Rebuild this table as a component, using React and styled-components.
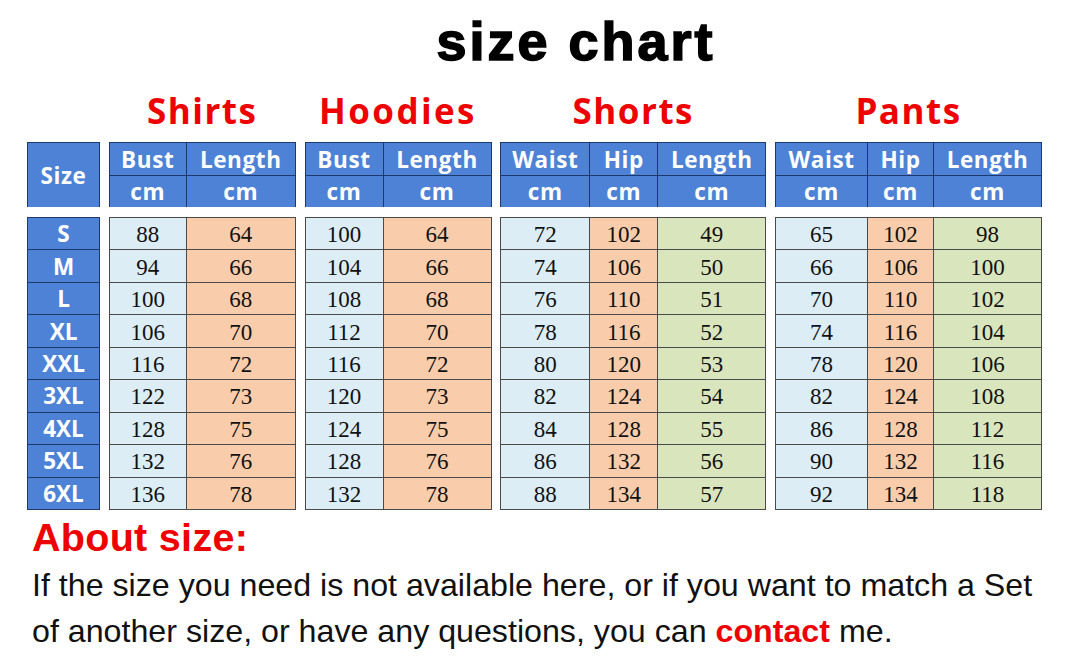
import React from 'react'
import styled, { createGlobalStyle } from 'styled-components'

const GlobalStyle = createGlobalStyle`
    html, body {
        margin: 0;
        padding: 0;
        background: #ffffff;
    }
    body {
        font-family: "Liberation Sans", Arial, sans-serif;
    }
`

const Page = styled.div`
    width: 1080px;
    height: 672px;
    overflow: hidden;
    box-sizing: border-box;
    padding: 12px 0 0 27px;
    background: #ffffff;
`

const Title = styled.h1`
    margin: 0;
    padding-left: 41px;
    width: 1016px;
    box-sizing: content-box;
    text-align: center;
    font-family: "Liberation Sans", Arial, sans-serif;
    font-weight: bold;
    font-size: 54px;
    line-height: 58px;
    letter-spacing: 3px;
    -webkit-text-stroke: 1.6px #000;
    color: #000;
`

const Chart = styled.div`
    display: grid;
    grid-template-columns: 73px 187px 187px 266px 267px;
    column-gap: 8.75px;
    margin-top: 14px;
`

const Group = styled.div`
    display: flex;
    flex-direction: column;
`

const Category = styled.div`
    height: 58px;
    padding-bottom: 6px;
    box-sizing: border-box;
    display: flex;
    align-items: center;
    justify-content: center;
    font-family: "Open Sans", "Noto Sans", sans-serif;
    font-weight: bold;
    font-size: 35px;
    letter-spacing: ${p => p.$wide ? '2.4px' : '1.5px'};
    color: #ee0000;
`

const HeadTable = styled.div`
    display: grid;
    grid-template-columns: ${p => p.cols};
    grid-template-rows: 32px 31px;
    gap: 1px;
    background: #1d3a6c;
    border: 1px solid #1d3a6c;
    height: 65px;
    box-sizing: border-box;
`

const HeadCell = styled.div`
    background: #4d82d6;
    color: #ffffff;
    display: flex;
    align-items: center;
    justify-content: center;
    font-family: "Open Sans", "Noto Sans", sans-serif;
    font-weight: bold;
    font-size: 22.5px;
    letter-spacing: 0.6px;
    grid-row: ${p => (p.$span ? '1 / span 2' : 'auto')};
`

const BodyTable = styled.div`
    margin-top: 10px;
    display: grid;
    grid-template-columns: ${p => p.cols};
    grid-auto-rows: 1fr;
    gap: 1px;
    background: ${p => (p.$navy ? '#1d3a6c' : '#4a4a4a')};
    border: 1px solid ${p => (p.$navy ? '#1d3a6c' : '#4a4a4a')};
    height: 293px;
    box-sizing: border-box;
`

const SizeCell = styled.div`
    background: #4d82d6;
    color: #ffffff;
    display: flex;
    align-items: center;
    justify-content: center;
    font-family: "Open Sans", "Noto Sans", sans-serif;
    font-weight: bold;
    font-size: 22.5px;
`

const tones = {
    blue: '#dcedf6',
    orange: '#f9cdab',
    green: '#d9e5bd',
}

const Cell = styled.div`
    background: ${p => tones[p.$tone]};
    color: #111;
    display: flex;
    align-items: center;
    justify-content: center;
    padding-top: 3px;
    font-family: "Liberation Serif", "Times New Roman", serif;
    font-size: 23px;
`

const About = styled.div`
    margin-top: 6px;
    padding-left: 5px;
    font-family: "Liberation Sans", Arial, sans-serif;
    font-weight: bold;
    font-size: 39.5px;
    line-height: 42px;
    color: #ee0000;
    letter-spacing: 0.3px;
`

const Note = styled.p`
    margin: 4px 0 0 5px;
    font-family: "Liberation Sans", Arial, sans-serif;
    font-size: 32.2px;
    line-height: 46px;
    color: #111;
    white-space: nowrap;
`

const Red = styled.span`
    color: #ee0000;
    font-weight: bold;
`

const sizes = ['S', 'M', 'L', 'XL', 'XXL', '3XL', '4XL', '5XL', '6XL']

const groups = [
    {
        name: 'Shirts',
        cols: '76px 1fr',
        heads: ['Bust', 'Length'],
        tones: ['blue', 'orange'],
        data: [[88, 64], [94, 66], [100, 68], [106, 70], [116, 72], [122, 73], [128, 75], [132, 76], [136, 78]],
    },
    {
        name: 'Hoodies',
        wide: true,
        cols: '77px 1fr',
        heads: ['Bust', 'Length'],
        tones: ['blue', 'orange'],
        data: [[100, 64], [104, 66], [108, 68], [112, 70], [116, 72], [120, 73], [124, 75], [128, 76], [132, 78]],
    },
    {
        name: 'Shorts',
        cols: '88px 67px 1fr',
        heads: ['Waist', 'Hip', 'Length'],
        tones: ['blue', 'orange', 'green'],
        data: [[72, 102, 49], [74, 106, 50], [76, 110, 51], [78, 116, 52], [80, 120, 53], [82, 124, 54], [84, 128, 55], [86, 132, 56], [88, 134, 57]],
    },
    {
        name: 'Pants',
        cols: '91px 65px 1fr',
        heads: ['Waist', 'Hip', 'Length'],
        tones: ['blue', 'orange', 'green'],
        data: [[65, 102, 98], [66, 106, 100], [70, 110, 102], [74, 116, 104], [78, 120, 106], [82, 124, 108], [86, 128, 112], [90, 132, 116], [92, 134, 118]],
    },
]

export default function App() {
    return (
        <>
            <GlobalStyle />
            <Page>
                <Title>size chart</Title>
                <Chart>
                    <Group>
                        <Category />
                        <HeadTable cols="1fr">
                            <HeadCell $span>Size</HeadCell>
                        </HeadTable>
                        <BodyTable cols="1fr" $navy>
                            {sizes.map(s => <SizeCell key={s}>{s}</SizeCell>)}
                        </BodyTable>
                    </Group>
                    {groups.map(g => (
                        <Group key={g.name}>
                            <Category $wide={g.wide}>{g.name}</Category>
                            <HeadTable cols={g.cols}>
                                {g.heads.map((h, i) => <HeadCell key={'h' + i}>{h}</HeadCell>)}
                                {g.heads.map((h, i) => <HeadCell key={'c' + i}>cm</HeadCell>)}
                            </HeadTable>
                            <BodyTable cols={g.cols}>
                                {g.data.map((row, r) =>
                                    row.map((v, i) => <Cell key={r + '-' + i} $tone={g.tones[i]}>{v}</Cell>)
                                )}
                            </BodyTable>
                        </Group>
                    ))}
                </Chart>
                <About>About size:</About>
                <Note>
                    If the size you need is not available here, or if you want to match a Set
                    <br />
                    of another size, or have any questions, you can <Red>contact</Red> me.
                </Note>
            </Page>
        </>
    )
}
